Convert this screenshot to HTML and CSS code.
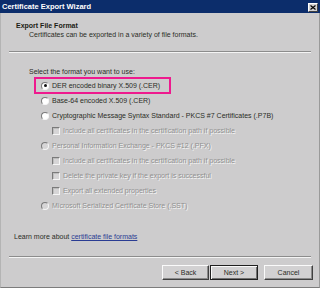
FILE: index.html
```html
<!DOCTYPE html>
<html>
<head>
  <meta charset="utf-8">
  <title>Certificate Export Wizard</title>
  <link rel="stylesheet" href="styles.css">
</head>
<body>
<div class="window">
  <div class="titlebar">
    <span class="title">Certificate Export Wizard</span>
    <span class="close">
      <svg width="6" height="5" viewBox="0 0 6 5"><path d="M0.5 0.5 L5.5 4.5 M5.5 0.5 L0.5 4.5" stroke="#000" stroke-width="1.2"/></svg>
    </span>
  </div>

  <div class="header">
    <h1>Export File Format</h1>
    <p>Certificates can be exported in a variety of file formats.</p>
  </div>
  <div class="sep"></div>

  <div class="content">
    <p class="prompt">Select the format you want to use:</p>
    <ul class="options">
      <li class="highlight"><span class="radio checked"></span>DER encoded binary X.509 (.CER)</li>
      <li><span class="radio"></span>Base-64 encoded X.509 (.CER)</li>
      <li><span class="radio"></span>Cryptographic Message Syntax Standard - PKCS #7 Certificates (.P7B)</li>
      <li class="sub off"><span class="check"></span>Include all certificates in the certification path if possible</li>
      <li class="off"><span class="radio"></span>Personal Information Exchange - PKCS #12 (.PFX)</li>
      <li class="sub off"><span class="check"></span>Include all certificates in the certification path if possible</li>
      <li class="sub off"><span class="check"></span>Delete the private key if the export is successful</li>
      <li class="sub off"><span class="check"></span>Export all extended properties</li>
      <li class="off"><span class="radio"></span>Microsoft Serialized Certificate Store (.SST)</li>
    </ul>
    <p class="learn">Learn more about <a href="#">certificate file formats</a></p>
  </div>
  <div class="sep"></div>

  <div class="buttons">
    <span class="btn">&lt; Back</span>
    <span class="btn default">Next &gt;</span>
    <span class="btn cancel">Cancel</span>
  </div>
</div>
</body>
</html>
```

FILE: styles.css
```css
html, body {margin: 0; padding: 0;}
body {width: 320px; height: 288px; overflow: hidden; background: #cdcccd;
  font-family: "Liberation Sans", Arial, sans-serif; font-size: 7px; color: #2b2d26;}

.window {height: 288px; box-sizing: border-box; display: flex; flex-direction: column;
  border-left: 1px solid #b4b4b4; border-right: 1px solid #9a9a9a; border-bottom: 1px solid #7c7c7c;}
.window > * {flex: none;}

/* title bar */
.titlebar {height: 13px; background: #0c2d6b; display: flex; align-items: center;
  justify-content: space-between; padding: 0 2px 0 2px; margin: 0 -1px;}
.title {color: #fff; font-weight: bold; font-size: 7.5px;}
.close {width: 10px; height: 9px; box-sizing: border-box; background: #d4d2d2; margin-top: 2px;
  border: 1px solid; border-color: #fff #404040 #404040 #fff;
  display: flex; align-items: center; justify-content: center;}
.close svg {display: block;}

/* header */
.header {padding: 8px 0 0 15px; height: 38px; box-sizing: border-box;}
.header h1 {margin: 0; font-size: 7px; line-height: 9px; font-weight: bold; color: #1c1c14;}
.header p {margin: 0 0 0 13px; line-height: 9px;}

.sep {height: 0; margin: 0 8px; border-top: 1px solid #8c8c8c; border-bottom: 1px solid #f4f4f4;}

/* body */
.content {height: 203px;}
.prompt {margin: 14px 0 0 28px; line-height: 9px;}
.options {list-style: none; margin: 2px 0 0 34px; padding: 0;}
.options li {height: 15px; display: flex; align-items: center; padding-left: 6px; white-space: nowrap;}
.options li.sub {padding-left: 17px;}
.options li.highlight {width: 135px; box-sizing: border-box; outline: 2px solid #ee1a8e; outline-offset: -1px;}

.radio {width: 8px; height: 8px; box-sizing: border-box; border-radius: 50%; margin-right: 3px;
  background: #fff; border: 1px solid; border-color: #7a7a7a #f6f6f6 #f6f6f6 #7a7a7a;
  display: flex; align-items: center; justify-content: center;}
.radio.checked::after {content: ""; width: 3px; height: 3px; border-radius: 50%; background: #111;}
.check {width: 8px; height: 8px; box-sizing: border-box; margin-right: 3px; background: #d6d5d6;
  border: 1px solid; border-color: #7a7a7a #f6f6f6 #f6f6f6 #7a7a7a; box-shadow: inset 1px 1px #bdbdbd;}
.off {color: #909090; text-shadow: 1px 1px 0 #f6f6f6;}
.off .radio {background: #d6d5d6;}

.learn {margin: 19px 0 0 13px; line-height: 9px;}
.learn a {color: #2a3c93;}

/* buttons */
.buttons {display: flex; justify-content: flex-end; padding: 7px 6px 0 0;}
.btn {width: 47px; height: 15px; box-sizing: border-box; display: flex; align-items: center;
  justify-content: center; background: #d2d1d2; border: 1px solid;
  border-color: #fafafa #404040 #404040 #fafafa; box-shadow: inset -1px -1px #8a8a8a;}
.btn.default {width: 48px; margin-left: 1px; border: 1px solid #202020;
  box-shadow: inset 1px 1px #fafafa, inset -1px -1px #707070;}
.btn.cancel {width: 49px; margin-left: 6px;}
```
